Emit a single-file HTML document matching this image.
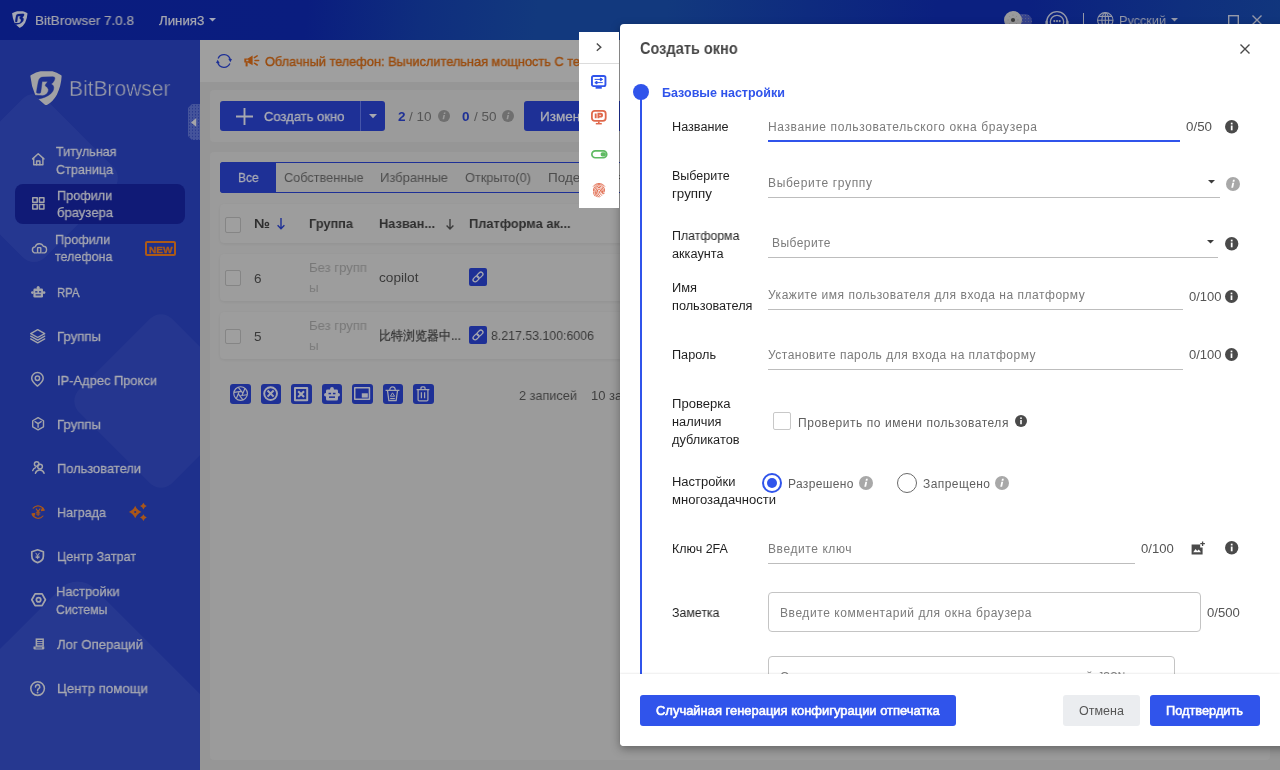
<!DOCTYPE html>
<html lang="ru"><head><meta charset="utf-8"><title>BitBrowser</title>
<style>
*{box-sizing:border-box;margin:0;padding:0}
html,body{width:1280px;height:770px;overflow:hidden;background:#949494;font-family:"Liberation Sans",sans-serif}
.a{position:absolute}
.t{position:absolute;white-space:nowrap;line-height:normal;transform-origin:0 50%;will-change:transform;font-family:"Liberation Sans",sans-serif}
svg{position:absolute;overflow:visible}
</style></head><body>

<div class="a" style="left:0;top:0;width:1280px;height:770px;background:#969696"></div>
<!-- header -->
<div class="a" style="left:0;top:0;width:1280px;height:40px;background:linear-gradient(97deg,#0a1c7f 0%,#0a1d7f 24%,#0f2e7e 33%,#12397e 42%,#12397e 52%,#0e2b7f 63%,#0b2080 73%,#0b2080 80%,#0f2f7e 92%,#11367d 100%)"></div>
<!-- sidebar -->
<div class="a" style="left:0;top:40px;width:200px;height:730px;background:#1e308c;overflow:hidden">
  <div class="a" style="left:-30px;top:74px;width:128px;height:128px;border-radius:16px;background:rgba(255,255,255,0.035);transform:rotate(45deg)"></div>
  <div class="a" style="left:95px;top:295px;width:132px;height:132px;border-radius:16px;background:rgba(255,255,255,0.03);transform:rotate(45deg)"></div>
  <div class="a" style="left:-78.5px;top:595.5px;width:311px;height:311px;border-radius:24px;background:rgba(255,255,255,0.04);transform:rotate(45deg)"></div>
</div>
<div class="a" style="left:15px;top:184px;width:170px;height:40px;border-radius:8px;background:#101a76"></div>
<!-- notice bar -->
<div class="a" style="left:200px;top:40px;width:1080px;height:42px;background:#9f9f9f"></div>
<!-- card 1 -->
<div class="a" style="left:210px;top:90px;width:1060px;height:52px;border-radius:4px;background:#9b9b9b"></div>
<!-- card 2 -->
<div class="a" style="left:210px;top:152px;width:1060px;height:608px;border-radius:4px;background:#9b9b9b"></div>
<!-- create button -->
<div class="a" style="left:220px;top:101px;width:165px;height:30px;border-radius:3px;background:#1e3096"></div>
<div class="a" style="left:360px;top:101px;width:1px;height:30px;background:rgba(255,255,255,0.18)"></div>
<div class="a" style="left:524px;top:101px;width:120px;height:30px;border-radius:3px;background:#1e3096"></div>
<!-- tabs -->
<div class="a" style="left:220px;top:162px;width:1040px;height:31px;border:1px solid #1e3096;border-radius:3px;"></div>
<div class="a" style="left:220px;top:162px;width:56px;height:31px;border-radius:3px 0 0 3px;background:#1e3096"></div>
<!-- table rows -->
<div class="a" style="left:220px;top:204px;width:1040px;height:39px;border-radius:4px;background:#9d9d9d;box-shadow:0 1px 3px rgba(0,0,0,0.06)"></div>
<div class="a" style="left:220px;top:254px;width:1040px;height:47px;border-radius:4px;background:#9d9d9d;box-shadow:0 1px 3px rgba(0,0,0,0.06)"></div>
<div class="a" style="left:220px;top:312px;width:1040px;height:47px;border-radius:4px;background:#9d9d9d;box-shadow:0 1px 3px rgba(0,0,0,0.06)"></div>
<div class="a" style="left:225.3px;top:217.3px;width:15.4px;height:15.4px;border:1px solid #858585;border-radius:2px;background:#9f9f9f"></div>
<div class="a" style="left:225.3px;top:270.2px;width:15.4px;height:15.4px;border:1px solid #858585;border-radius:2px;background:#9f9f9f"></div>
<div class="a" style="left:225.3px;top:328.6px;width:15.4px;height:15.4px;border:1px solid #858585;border-radius:2px;background:#9f9f9f"></div>
<div class="a" style="left:469px;top:268px;width:18px;height:18px;border-radius:2px;background:#1e3096"></div>
<div class="a" style="left:469px;top:326px;width:18px;height:18px;border-radius:2px;background:#1e3096"></div>
<div class="a" style="left:229.7px;top:383.9px;width:21.1px;height:19.8px;border-radius:3px;background:#1e3096"></div>
<div class="a" style="left:261px;top:383.9px;width:20px;height:19.8px;border-radius:3px;background:#1e3096"></div>
<div class="a" style="left:291.1px;top:383.9px;width:20.6px;height:19.8px;border-radius:3px;background:#1e3096"></div>
<div class="a" style="left:322px;top:383.9px;width:19.8px;height:19.8px;border-radius:3px;background:#1e3096"></div>
<div class="a" style="left:352.1px;top:383.9px;width:20.8px;height:19.8px;border-radius:3px;background:#1e3096"></div>
<div class="a" style="left:383px;top:383.9px;width:19.8px;height:19.8px;border-radius:3px;background:#1e3096"></div>
<div class="a" style="left:413.1px;top:383.9px;width:20.6px;height:19.8px;border-radius:3px;background:#1e3096"></div>
<svg style="left:11.6px;top:11.4px;" width="15.6" height="17" viewBox="0 0 32 35"><path d="M0.2,5.4 Q0,4.5 1,4.1 Q6,1 10.5,0.3 L22.5,0.3 Q27,1.2 31,4.1 Q32,4.6 31.8,5.6 Q31.3,15 27,24 Q23,31 17.3,34.2 Q16,34.9 14.6,34 L8.2,28.3 L5.2,24.6 Q1,15 0.2,5.4 Z" fill="#a5a8b4"/><path d="M6.3,21.8 L7.1,16.4 L8.2,10.7 Q8.8,8 9.8,7.3 Q11,6.2 12.9,6.1 L22.9,5.7 Q25.3,5.8 25,7.4 Q24.8,9 24.1,10.2 Q23,12.2 21.4,13.2 Q24.2,14.6 23.9,17 Q23.8,19.5 22.6,21 Q21,23.4 18,25 Q15,26.6 12,27.5 Q10,28 8.2,28.4 L4.6,24.5 L11.4,24.9 Q13,25 14.2,24.6 Q16,24 17.2,22.4 Q18.8,20.2 18.4,18.6 Q18,17.2 16.6,16.2 Q15.6,15.4 15.1,14.3 Q15.6,13.4 16.4,12.4 Q17.4,11.4 17.5,10.7 L12.1,10.7 L11.4,16.4 L10.7,21.4 Q10.4,22.6 9,22.6 Q6.4,22.8 6.3,21.8 Z" fill="#0b1e80" stroke="#0b1e80" stroke-width="0.4" stroke-linejoin="round"/></svg>
<svg style="left:30px;top:70.7px;" width="32" height="34.6" viewBox="0 0 32 35"><path d="M0.2,5.4 Q0,4.5 1,4.1 Q6,1 10.5,0.3 L22.5,0.3 Q27,1.2 31,4.1 Q32,4.6 31.8,5.6 Q31.3,15 27,24 Q23,31 17.3,34.2 Q16,34.9 14.6,34 L8.2,28.3 L5.2,24.6 Q1,15 0.2,5.4 Z" fill="#a2a2a4"/><path d="M6.3,21.8 L7.1,16.4 L8.2,10.7 Q8.8,8 9.8,7.3 Q11,6.2 12.9,6.1 L22.9,5.7 Q25.3,5.8 25,7.4 Q24.8,9 24.1,10.2 Q23,12.2 21.4,13.2 Q24.2,14.6 23.9,17 Q23.8,19.5 22.6,21 Q21,23.4 18,25 Q15,26.6 12,27.5 Q10,28 8.2,28.4 L4.6,24.5 L11.4,24.9 Q13,25 14.2,24.6 Q16,24 17.2,22.4 Q18.8,20.2 18.4,18.6 Q18,17.2 16.6,16.2 Q15.6,15.4 15.1,14.3 Q15.6,13.4 16.4,12.4 Q17.4,11.4 17.5,10.7 L12.1,10.7 L11.4,16.4 L10.7,21.4 Q10.4,22.6 9,22.6 Q6.4,22.8 6.3,21.8 Z" fill="#1e308c" stroke="#1e308c" stroke-width="0.4" stroke-linejoin="round"/></svg>
<svg style="left:208.8px;top:18.2px;" width="7" height="3.6" viewBox="0 0 7 3.6"><path d="M0,0 H7 L3.5,3.6 Z" fill="#a3a7ba"/></svg>
<div class="a" style="left:188px;top:104px;width:12px;height:36px;background-color:#45549b;background-image:radial-gradient(circle,#2a3a8e 0.7px,transparent 1px);background-size:3px 3.1px;clip-path:polygon(4px 0,100% 0,100% 100%,4px 100%,0 32px,0 4px)"></div><svg style="left:191px;top:117.6px;" width="5.2" height="8.8" viewBox="0 0 5.2 8.8"><path d="M5.2,0 V8.8 L0,4.4 Z" fill="#a5a5a8"/></svg>
<svg style="left:31.8px;top:153.4px;" width="12.5" height="12.5" viewBox="0 0 12.5 12.5"><g fill="none" stroke="#a3a4aa" stroke-width="1.45" stroke-linejoin="round" stroke-linecap="round"><path d="M0.6,5.9 L6.2,0.7 L11.9,5.9"/><path d="M1.7,5.2 V11.8 H10.9 V5.2"/><path d="M4.6,11.8 V7.9 H7.9 V11.8"/></g></svg>
<svg style="left:31.8px;top:197.3px;" width="12.7" height="12.7" viewBox="0 0 12.7 12.7"><g fill="none" stroke="#a3a4aa" stroke-width="1.5" stroke-linejoin="round" stroke-linecap="round"><rect x="0.75" y="0.75" width="4.5" height="4.5"/><rect x="7.45" y="0.75" width="4.5" height="4.5"/><rect x="0.75" y="7.45" width="4.5" height="4.5"/><rect x="7.45" y="7.45" width="4.5" height="4.5"/></g></svg>
<svg style="left:31.7px;top:243px;" width="14.7" height="10.6" viewBox="0 0 14.7 10.6"><g fill="none" stroke="#a3a4aa" stroke-width="1.4" stroke-linejoin="round" stroke-linecap="round"><path d="M4.6,9.9 H3.6 A3,3 0 0 1 3.2,3.9 A4.3,4.3 0 0 1 11.3,3.3 A3.3,3.3 0 0 1 11.2,9.9 H9.9"/><rect x="5.6" y="4.6" width="3.2" height="5.3" rx="0.4"/></g></svg>
<svg style="left:31.1px;top:286px;" width="14.4" height="11.6" viewBox="0 0 14.4 11.6"><g fill="#a3a4aa"><rect x="2.4" y="2.6" width="9.6" height="9" rx="1.3"/><circle cx="1.4" cy="6.6" r="1.4"/><circle cx="13" cy="6.6" r="1.4"/><path d="M5.6,2.8 A1.7,1.9 0 0 1 8.8,2.8 Z" /><circle cx="7.2" cy="1.6" r="1.5"/></g><g fill="#1e308c"><rect x="4.2" y="5.2" width="2.2" height="1.3"/><rect x="8" y="5.2" width="2.2" height="1.3"/><rect x="4.6" y="8.3" width="5.2" height="1.2"/></g></svg>
<svg style="left:30.3px;top:328.5px;" width="15.4" height="14.5" viewBox="0 0 15.4 14.5"><g fill="none" stroke="#a3a4aa" stroke-width="1.4" stroke-linejoin="round" stroke-linecap="round"><path d="M7.7,0.7 L14.7,4.6 L7.7,8.5 L0.7,4.6 Z"/><path d="M0.7,7.2 L7.7,11.1 L14.7,7.2"/><path d="M0.7,9.9 L7.7,13.8 L14.7,9.9"/></g></svg>
<svg style="left:31.4px;top:372.3px;" width="12.9" height="14.8" viewBox="0 0 12.9 14.8"><g fill="none" stroke="#a3a4aa" stroke-width="1.5" stroke-linejoin="round" stroke-linecap="round"><path d="M6.45,14.1 C6.45,14.1 0.7,9.6 0.7,6.3 A5.75,5.75 0 0 1 12.2,6.3 C12.2,9.6 6.45,14.1 6.45,14.1 Z"/><circle cx="6.45" cy="6.3" r="2.2"/></g></svg>
<svg style="left:31.9px;top:417px;" width="12.2" height="13.6" viewBox="0 0 12.2 13.6"><g fill="none" stroke="#a3a4aa" stroke-width="1.4" stroke-linejoin="round" stroke-linecap="round"><path d="M6.1,0.7 L11.5,3.75 V9.85 L6.1,12.9 L0.7,9.85 V3.75 Z"/><path d="M3,4.7 L6.1,6.6 L9.2,4.7 M6.1,6.6 V10.2"/></g></svg>
<svg style="left:31.7px;top:461.3px;" width="12.8" height="12.8" viewBox="0 0 12.8 12.8"><g fill="none" stroke="#a3a4aa" stroke-width="1.45" stroke-linejoin="round" stroke-linecap="round"><circle cx="4.7" cy="3" r="2.3"/><path d="M0.7,9.6 A4.4,4.4 0 0 1 3.6,6.6"/><circle cx="8" cy="5.6" r="2.4"/><path d="M3.4,12.2 A4.6,4.6 0 0 1 12.1,12.2"/></g></svg>
<svg style="left:31px;top:504.8px;" width="14.2" height="14.2" viewBox="0 0 14.2 14.2"><g fill="none" stroke="#a8561a" stroke-width="1.1" stroke-linejoin="round" stroke-linecap="round"><path d="M2.2,3.2 A6.2,6.2 0 0 1 12.9,5"/><path d="M12,11 A6.2,6.2 0 0 1 1.3,9.2"/><path d="M11.6,2.6 L13.2,5.3 L10.4,5.6 Z" fill="#a8561a"/><path d="M2.6,11.6 L1,8.9 L3.8,8.6 Z" fill="#a8561a"/><path d="M5.2,3.9 L7.1,6.6 L9,3.9 M7.1,6.6 V10.4 M5.3,7.3 H8.9 M5.3,9 H8.9"/></g></svg>
<svg style="left:31.3px;top:548.6px;" width="13.2" height="14.3" viewBox="0 0 13.2 14.3"><g fill="none" stroke="#a3a4aa" stroke-width="1.7" stroke-linejoin="round" stroke-linecap="round"><path d="M6.6,0.8 L12.4,2.7 V7 C12.4,10.4 9.6,12.7 6.6,13.6 C3.6,12.7 0.8,10.4 0.8,7 V2.7 Z"/></g><g fill="none" stroke="#a3a4aa" stroke-width="1.0" stroke-linejoin="round" stroke-linecap="round"><path d="M4.9,4.2 L6.6,6.5 L8.3,4.2 M6.6,6.5 V9.7 M5,7.2 H8.2 M5,8.6 H8.2"/></g></svg>
<svg style="left:30.8px;top:592.7px;" width="15.2" height="13.5" viewBox="0 0 15.2 13.5"><g fill="none" stroke="#a3a4aa" stroke-width="1.75" stroke-linejoin="round" stroke-linecap="round"><path d="M4.1,0.8 H11.1 L14.4,6.75 L11.1,12.7 H4.1 L0.8,6.75 Z"/><circle cx="7.6" cy="6.75" r="2.2"/></g></svg>
<svg style="left:32.5px;top:638.3px;" width="11.9" height="11.8" viewBox="0 0 11.9 11.8"><g fill="#a3a4aa"><path d="M2.6,0.4 H10.9 V8.6 H2.6 Z"/><path d="M0.5,8.6 H11.3 V10.2 Q11.3,11.5 10,11.5 H1.8 Q0.5,11.5 0.5,10.2 Z"/></g><g fill="#1e308c"><rect x="4.2" y="2" width="5.2" height="1.1"/><rect x="4.2" y="4.1" width="5.2" height="1.1"/><rect x="4.2" y="6.2" width="5.2" height="1.1"/><rect x="2.6" y="9.5" width="6.4" height="0.9"/></g></svg>
<svg style="left:30.4px;top:680.6px;" width="15.2" height="15.2" viewBox="0 0 15.2 15.2"><g fill="none" stroke="#a3a4aa" stroke-width="1.55" stroke-linejoin="round" stroke-linecap="round"><circle cx="7.6" cy="7.6" r="6.8"/><path d="M5.5,6 A2.15,2.15 0 1 1 8.7,7.7 C7.8,8.3 7.6,8.7 7.6,9.5"/></g><circle cx="7.6" cy="11.5" r="0.9" fill="#a3a4aa"/></svg>
<div class="a" style="left:145px;top:240.5px;width:31px;height:15.5px;border:2px solid #ad5a17;border-radius:2px;"></div><svg style="left:128px;top:501px;" width="21" height="22" viewBox="0 0 21 22"><path d="M7.2,4.7 Q8.964,9.236 13.5,11 Q8.964,12.764 7.2,17.3 Q5.436,12.764 0.9000000000000004,11 Q5.436,9.236 7.2,4.7 Z" fill="#a8561a"/><circle cx="7.2" cy="11" r="1.1" fill="#1e308c"/><path d="M15.4,1.6999999999999997 Q16.352,4.148 18.8,5.1 Q16.352,6.052 15.4,8.5 Q14.448,6.052 12.0,5.1 Q14.448,4.148 15.4,1.6999999999999997 Z" fill="#a8561a"/><path d="M15.4,13.200000000000001 Q16.352,15.648000000000001 18.8,16.6 Q16.352,17.552000000000003 15.4,20.0 Q14.448,17.552000000000003 12.0,16.6 Q14.448,15.648000000000001 15.4,13.200000000000001 Z" fill="#a8561a"/></svg>
<svg style="left:216px;top:52.5px;" width="16" height="16" viewBox="0 0 16 16"><g fill="none" stroke="#1e3096" stroke-width="1.3"><path d="M2.1,5.4 A6.5,6.5 0 0 1 14.2,6.2"/><path d="M13.9,10.6 A6.5,6.5 0 0 1 1.8,9.8"/></g><path d="M12.2,5.8 L16,6 L14.4,9.2 Z" fill="#1e3096"/><path d="M3.8,10.2 L0,10 L1.6,6.8 Z" fill="#1e3096"/></svg>
<svg style="left:244px;top:55px;" width="16" height="12" viewBox="0 0 16 12"><g fill="#9f4e10"><path d="M0.3,3.6 H3.8 L8.6,0.6 V10.2 L3.8,7.4 H0.3 Z"/><rect x="1.6" y="7.2" width="2" height="4.2"/></g><g stroke="#9f4e10" stroke-width="1.5" stroke-linecap="round"><path d="M11,5.4 H14.6"/><path d="M10.4,2.6 L13.2,0.8"/><path d="M10.4,8.2 L13.2,10"/></g><rect x="2.2" y="4.7" width="2.2" height="1.5" fill="#9f9f9f"/></svg>
<svg style="left:235.5px;top:107.5px;" width="17" height="17" viewBox="0 0 17 17"><path d="M8.5,0 V17 M0,8.5 H17" stroke="#a7a8b0" stroke-width="1.9" fill="none"/></svg>
<svg style="left:368.6px;top:114px;" width="8" height="4.2" viewBox="0 0 8 4.2"><path d="M0,0 H8 L4,4.2 Z" fill="#a7a8b0"/></svg>
<svg style="left:437.6px;top:109.8px" width="12" height="12" viewBox="-6.5 -6.5 13 13"><circle cx="0" cy="0" r="6.5" fill="#6f6f6f"/><g fill="#9b9b9b" transform="skewX(-12)"><rect x="-0.85" y="-1.1" width="1.7" height="4.6"/><rect x="-0.85" y="-3.9" width="1.7" height="1.7"/></g></svg>
<svg style="left:502.3px;top:109.8px" width="12" height="12" viewBox="-6.5 -6.5 13 13"><circle cx="0" cy="0" r="6.5" fill="#6f6f6f"/><g fill="#9b9b9b" transform="skewX(-12)"><rect x="-0.85" y="-1.1" width="1.7" height="4.6"/><rect x="-0.85" y="-3.9" width="1.7" height="1.7"/></g></svg>
<svg style="left:276.6px;top:217.6px;" width="8" height="11.400000000000006" viewBox="0 0 8 11.400000000000006"><path d="M4,0 V10.800000000000006 M0.6,7.2000000000000055 L4,10.700000000000006 L7.4,7.2000000000000055" fill="none" stroke="#1e3096" stroke-width="1.4" stroke-linejoin="miter"/></svg>
<svg style="left:446.1px;top:218.6px;" width="8" height="10.800000000000011" viewBox="0 0 8 10.800000000000011"><path d="M4,0 V10.200000000000012 M0.6,6.600000000000011 L4,10.100000000000012 L7.4,6.600000000000011" fill="none" stroke="#3c3c3c" stroke-width="1.4" stroke-linejoin="miter"/></svg>
<svg style="left:471px;top:270px;" width="14" height="14" viewBox="0 0 14 14"><g transform="rotate(-45 7 7)" fill="none" stroke="#a5a6af" stroke-width="1.3"><rect x="0.9" y="4.9" width="6.6" height="4.2" rx="2.1"/><rect x="6.5" y="4.9" width="6.6" height="4.2" rx="2.1"/></g></svg>
<svg style="left:471px;top:328px;" width="14" height="14" viewBox="0 0 14 14"><g transform="rotate(-45 7 7)" fill="none" stroke="#a5a6af" stroke-width="1.3"><rect x="0.9" y="4.9" width="6.6" height="4.2" rx="2.1"/><rect x="6.5" y="4.9" width="6.6" height="4.2" rx="2.1"/></g></svg>
<svg style="left:232.70000000000002px;top:386.2px;" width="15.2" height="15.2" viewBox="0 0 14 14"><g fill="none" stroke="#a5a6af" stroke-width="1.1" stroke-linejoin="round"><circle cx="7" cy="7" r="6.3"/><path d="M13.11,8.08 L6.28,8.97 M9.12,12.83 L4.93,7.36 M3.01,11.75 L5.65,5.39 M0.89,5.92 L7.72,5.03 M4.88,1.17 L9.07,6.64 M10.99,2.25 L8.35,8.61 "/></g></svg>
<svg style="left:263.4px;top:386.2px;" width="15.2" height="15.2" viewBox="0 0 14 14"><g fill="none" stroke="#a5a6af" stroke-width="1.8" stroke-linejoin="round"><circle cx="7" cy="7" r="5.9"/></g><g fill="none" stroke="#a5a6af" stroke-width="1.9" stroke-linejoin="round"><path d="M4.2,4.2 L9.8,9.8 M9.8,4.2 L4.2,9.8"/></g></svg>
<svg style="left:294.29999999999995px;top:386.7px;" width="14.2" height="14.2" viewBox="0 0 13 13"><g fill="none" stroke="#a5a6af" stroke-width="1.8" stroke-linejoin="round"><rect x="0.9" y="0.9" width="11.2" height="11.2"/></g><g fill="none" stroke="#a5a6af" stroke-width="1.9" stroke-linejoin="round"><path d="M3.8,3.8 L9.2,9.2 M9.2,3.8 L3.8,9.2"/></g></svg>
<svg style="left:323.9px;top:386.6px;" width="16" height="13.4" viewBox="0 0 16 13.4"><g fill="#a5a6af"><rect x="2" y="2.6" width="12" height="10.8" rx="1.5"/><circle cx="1.7" cy="7.8" r="1.7"/><circle cx="14.3" cy="7.8" r="1.7"/><circle cx="8" cy="1.9" r="1.9"/><rect x="6.2" y="1.9" width="3.6" height="1.4"/></g><g fill="#1e3096"><rect x="4.5" y="5.8" width="2.6" height="1.5"/><rect x="8.9" y="5.8" width="2.6" height="1.5"/><rect x="5" y="9.4" width="6" height="1.5"/></g></svg>
<svg style="left:354.4px;top:387.3px;" width="16.2" height="13" viewBox="0 0 15 12"><g fill="none" stroke="#a5a6af" stroke-width="1.4" stroke-linejoin="round"><rect x="0.7" y="0.7" width="13.6" height="10.6"/></g><rect x="7.2" y="5.8" width="5.6" height="4" fill="#a5a6af"/></svg>
<svg style="left:385.4px;top:385.8px;" width="15" height="16" viewBox="0 0 14 15"><g fill="none" stroke="#a5a6af" stroke-width="1.2" stroke-linejoin="round"><path d="M0.5,4.2 H13.5 M2.3,4.2 L3.6,13.7 H10.4 L11.7,4.2 M4.4,4 A2.6,3.2 0 0 1 9.6,4"/></g><g fill="none" stroke="#a5a6af" stroke-width="0.9" stroke-linejoin="round"><path d="M7,6.4 L9,9.6 H5 Z"/></g><rect x="4.8" y="11.2" width="4.4" height="1.2" fill="#a5a6af"/></svg>
<svg style="left:416.4px;top:385.8px;" width="14" height="16" viewBox="0 0 13 15"><g fill="none" stroke="#a5a6af" stroke-width="1.2" stroke-linejoin="round"><path d="M0.5,3.4 H12.5 M4.6,3.2 V1.8 Q4.6,0.8 5.6,0.8 H7.4 Q8.4,0.8 8.4,1.8 V3.2 M1.9,3.6 V12.8 Q1.9,13.9 3,13.9 H10 Q11.1,13.9 11.1,12.8 V3.6 M5,5.8 V11.6 M8,5.8 V11.6"/></g></svg>
<div class="a" style="left:1012px;top:14px;width:20px;height:14px;border-radius:7px;background-color:#37448f;background-image:radial-gradient(circle,#5a5f8a 0.6px,transparent 0.9px);background-size:3px 3px"></div><div class="a" style="left:1004px;top:10.8px;width:18px;height:18px;border-radius:9px;background:#9a9a9c"></div><svg style="left:1004px;top:10.8px;" width="18" height="18" viewBox="0 0 18 18"><circle cx="9" cy="9" r="2.1" fill="#3c3c3c"/><g stroke="#8a8a8c" stroke-width="1"><path d="M9,3.4 V5 M9,13 V14.6 M3.4,9 H5 M13,9 H14.6 M5,5 L6.2,6.2 M11.8,11.8 L13,13 M13,5 L11.8,6.2 M5,13 L6.2,11.8"/></g></svg>
<svg style="left:1046px;top:11.2px;" width="22" height="22" viewBox="0 0 22 22"><g fill="none" stroke="#9599a9" stroke-width="1.3"><circle cx="11" cy="11" r="10.3"/><circle cx="11" cy="11" r="6.7"/></g><g fill="#9599a9"><circle cx="8.3" cy="10.1" r="1.05"/><circle cx="11" cy="10.1" r="1.05"/><circle cx="13.7" cy="10.1" r="1.05"/><rect x="-0.6" y="9.6" width="2.4" height="5" rx="1.2"/><rect x="20.2" y="9.6" width="2.4" height="5" rx="1.2"/></g></svg>
<div class="a" style="left:1083px;top:13px;width:1px;height:15px;background:#9599a9"></div><svg style="left:1096.5px;top:12px;" width="16.6" height="16.6" viewBox="0 0 16.6 16.6"><g fill="none" stroke="#9599a9" stroke-width="1.1"><circle cx="8.3" cy="8.3" r="7.7"/><ellipse cx="8.3" cy="8.3" rx="3.4" ry="7.7"/><path d="M0.6,8.3 H16 M1.6,4.4 H15 M1.6,12.2 H15 M8.3,0.6 V16"/></g></svg>
<svg style="left:1171px;top:18.4px;" width="7" height="3.6" viewBox="0 0 7 3.6"><path d="M0,0 H7 L3.5,3.6 Z" fill="#9599a9"/></svg>
<svg style="left:1227.6px;top:14.6px;" width="11" height="12" viewBox="0 0 11 12"><rect x="0.7" y="0.7" width="9.6" height="10.6" fill="none" stroke="#9599a9" stroke-width="1.4"/></svg>
<svg style="left:1252px;top:15px;" width="10" height="10" viewBox="0 0 10 10"><path d="M0.5,0.5 L9.5,9.5 M9.5,0.5 L0.5,9.5" stroke="#9599a9" stroke-width="1.4" fill="none"/></svg>

<span class="t" id="t0" style="left:35.00px;top:12.69px;font-size:13.6px;color:#a1a2ab;-webkit-text-stroke:0.2px #a1a2ab;transform:scaleX(0.9926);">BitBrowser 7.0.8</span>
<span class="t" id="t1" style="left:158.60px;top:13.23px;font-size:13px;color:#a6a7b0;-webkit-text-stroke:0.25px #a6a7b0;transform:scaleX(1.0199);">Линия3</span>
<span class="t" id="t2" style="left:1119.20px;top:13.23px;font-size:13px;color:#9599a9;transform:scaleX(0.9741);">Русский</span>
<span class="t" id="t3" style="left:68.60px;top:75.89px;font-size:22px;color:#a3a4ab;transform:scaleX(0.9543);-webkit-text-stroke:0.45px #1e308c;">BitBrowser</span>
<span class="t" id="t4" style="left:55.50px;top:144.28px;font-size:13.5px;color:#a8a9b1;-webkit-text-stroke:0.3px #a8a9b1;transform:scaleX(0.9283);">Титульная</span>
<span class="t" id="t5" style="left:55.50px;top:161.78px;font-size:13.5px;color:#a8a9b1;-webkit-text-stroke:0.3px #a8a9b1;transform:scaleX(0.9316);">Страница</span>
<span class="t" id="t6" style="left:57.20px;top:187.78px;font-size:13.5px;color:#a8a9b1;-webkit-text-stroke:0.3px #a8a9b1;transform:scaleX(0.9405);">Профили</span>
<span class="t" id="t7" style="left:57.20px;top:205.48px;font-size:13.5px;color:#a8a9b1;-webkit-text-stroke:0.3px #a8a9b1;transform:scaleX(0.9668);">браузера</span>
<span class="t" id="t8" style="left:54.80px;top:231.78px;font-size:13.5px;color:#a8a9b1;-webkit-text-stroke:0.3px #a8a9b1;transform:scaleX(0.9405);">Профили</span>
<span class="t" id="t9" style="left:54.80px;top:249.38px;font-size:13.5px;color:#a8a9b1;-webkit-text-stroke:0.3px #a8a9b1;transform:scaleX(0.9265);">телефона</span>
<span class="t" id="t10" style="left:56.50px;top:285.28px;font-size:13.5px;color:#a8a9b1;-webkit-text-stroke:0.3px #a8a9b1;transform:scaleX(0.8406);">RPA</span>
<span class="t" id="t11" style="left:56.50px;top:329.28px;font-size:13.5px;color:#a8a9b1;-webkit-text-stroke:0.3px #a8a9b1;transform:scaleX(0.9781);">Группы</span>
<span class="t" id="t12" style="left:56.50px;top:373.28px;font-size:13.5px;color:#a8a9b1;-webkit-text-stroke:0.3px #a8a9b1;transform:scaleX(0.9549);">IP-Адрес Прокси</span>
<span class="t" id="t13" style="left:56.50px;top:417.28px;font-size:13.5px;color:#a8a9b1;-webkit-text-stroke:0.3px #a8a9b1;transform:scaleX(0.9781);">Группы</span>
<span class="t" id="t14" style="left:56.50px;top:461.28px;font-size:13.5px;color:#a8a9b1;-webkit-text-stroke:0.3px #a8a9b1;transform:scaleX(0.9532);">Пользователи</span>
<span class="t" id="t15" style="left:56.50px;top:505.28px;font-size:13.5px;color:#a8a9b1;-webkit-text-stroke:0.3px #a8a9b1;transform:scaleX(0.9317);">Награда</span>
<span class="t" id="t16" style="left:56.50px;top:549.28px;font-size:13.5px;color:#a8a9b1;-webkit-text-stroke:0.3px #a8a9b1;transform:scaleX(0.9311);">Центр Затрат</span>
<span class="t" id="t17" style="left:56.00px;top:584.28px;font-size:13.5px;color:#a8a9b1;-webkit-text-stroke:0.3px #a8a9b1;transform:scaleX(0.9592);">Настройки</span>
<span class="t" id="t18" style="left:56.00px;top:602.28px;font-size:13.5px;color:#a8a9b1;-webkit-text-stroke:0.3px #a8a9b1;transform:scaleX(0.9102);">Системы</span>
<span class="t" id="t19" style="left:56.50px;top:637.28px;font-size:13.5px;color:#a8a9b1;-webkit-text-stroke:0.3px #a8a9b1;transform:scaleX(0.9750);">Лог Операций</span>
<span class="t" id="t20" style="left:56.50px;top:681.28px;font-size:13.5px;color:#a8a9b1;-webkit-text-stroke:0.3px #a8a9b1;transform:scaleX(0.9821);">Центр помощи</span>
<span class="t" id="t21" style="left:148.80px;top:243.60px;font-size:9.5px;color:#ad5a17;font-weight:700;-webkit-text-stroke:0.3px #ad5a17;transform:scaleX(1.0644);">NEW</span>
<span class="t" id="t22" style="left:264.60px;top:54.03px;font-size:13px;color:#9a4c0e;-webkit-text-stroke:0.4px #9a4c0e;transform:scaleX(0.9813);">Облачный телефон: Вычислительная мощность С те</span>
<span class="t" id="t23" style="left:263.60px;top:108.78px;font-size:13.5px;color:#abacb5;-webkit-text-stroke:0.35px #abacb5;transform:scaleX(0.9636);">Создать окно</span>
<span class="t" id="t24" style="left:397.70px;top:108.78px;font-size:13.5px;color:#1e3096;font-weight:700;">2</span>
<span class="t" id="t25" style="left:409.00px;top:108.78px;font-size:13.5px;color:#555;">/ 10</span>
<span class="t" id="t26" style="left:462.00px;top:108.78px;font-size:13.5px;color:#1e3096;font-weight:700;">0</span>
<span class="t" id="t27" style="left:473.50px;top:108.78px;font-size:13.5px;color:#555;">/ 50</span>
<span class="t" id="t28" style="left:540.20px;top:108.78px;font-size:13.5px;color:#abacb5;-webkit-text-stroke:0.3px #abacb5;">Изменить</span>
<span class="t" id="t29" style="left:237.80px;top:169.78px;font-size:13.5px;color:#abacb5;-webkit-text-stroke:0.3px #abacb5;transform:scaleX(0.8897);">Все</span>
<span class="t" id="t30" style="left:284.00px;top:169.78px;font-size:13.5px;color:#4d4d4d;transform:scaleX(0.9417);">Собственные</span>
<span class="t" id="t31" style="left:380.00px;top:169.78px;font-size:13.5px;color:#4d4d4d;transform:scaleX(0.9628);">Избранные</span>
<span class="t" id="t32" style="left:464.70px;top:169.78px;font-size:13.5px;color:#4d4d4d;transform:scaleX(0.9450);">Открыто(0)</span>
<span class="t" id="t33" style="left:547.50px;top:169.78px;font-size:13.5px;color:#4d4d4d;">Поделиться</span>
<span class="t" id="t34" style="left:254.00px;top:216.28px;font-size:13.5px;color:#2f2f2f;font-weight:700;transform:scaleX(1.0622);">№</span>
<span class="t" id="t35" style="left:309.00px;top:216.28px;font-size:13.5px;color:#2f2f2f;font-weight:700;transform:scaleX(0.9453);">Группа</span>
<span class="t" id="t36" style="left:378.80px;top:216.28px;font-size:13.5px;color:#2f2f2f;font-weight:700;transform:scaleX(0.9464);">Назван...</span>
<span class="t" id="t37" style="left:469.00px;top:216.28px;font-size:13.5px;color:#2f2f2f;font-weight:700;transform:scaleX(0.9492);">Платформа ак...</span>
<span class="t" id="t38" style="left:253.60px;top:271.28px;font-size:13.5px;color:#3a3a3a;">6</span>
<span class="t" id="t39" style="left:253.60px;top:329.28px;font-size:13.5px;color:#3a3a3a;">5</span>
<span class="t" id="t40" style="left:308.60px;top:259.98px;font-size:13.5px;color:#787878;transform:scaleX(0.9720);">Без групп</span>
<span class="t" id="t41" style="left:308.60px;top:279.78px;font-size:13.5px;color:#7d7d7d;">ы</span>
<span class="t" id="t42" style="left:308.60px;top:317.98px;font-size:13.5px;color:#787878;transform:scaleX(0.9720);">Без групп</span>
<span class="t" id="t43" style="left:308.60px;top:337.78px;font-size:13.5px;color:#7d7d7d;">ы</span>
<span class="t" id="t44" style="left:379.00px;top:270.48px;font-size:13.5px;color:#3a3a3a;transform:scaleX(1.0120);">copilot</span>
<span class="t" id="t45" style="left:379.00px;top:327.04px;font-size:13px;color:#303030;-webkit-text-stroke:0.2px #303030;transform:scaleX(0.9230);">比特浏览器中...</span>
<span class="t" id="t46" style="left:491.00px;top:328.28px;font-size:13.5px;color:#3a3a3a;transform:scaleX(0.9147);">8.217.53.100:6006</span>
<span class="t" id="t47" style="left:519.00px;top:388.24px;font-size:13px;color:#3f3f3f;transform:scaleX(0.9776);">2 записей</span>
<span class="t" id="t48" style="left:591.00px;top:388.24px;font-size:13px;color:#3f3f3f;">10 записей</span>

<!-- dialog -->
<div class="a" style="left:620px;top:24px;width:680px;height:722px;border-radius:4px;background:#fff;box-shadow:0 3px 10px rgba(0,0,0,0.35)"></div>
<!-- tool panel -->
<div class="a" style="left:579px;top:32px;width:40px;height:176px;background:#fff;"></div>
<div class="a" style="left:579px;top:63px;width:40px;height:1px;background:#dcdcdc"></div>
<svg style="left:596.4px;top:43px;" width="6" height="8.4" viewBox="0 0 6 8.4"><path d="M0.8,0.6 L4.8,4.2 L0.8,7.8" fill="none" stroke="#4a4a4a" stroke-width="1.4"/></svg>
<svg style="left:591.4px;top:75px;" width="15.4" height="14" viewBox="0 0 15.4 14"><rect x="0.95" y="0.95" width="13.5" height="10.2" rx="1.6" fill="none" stroke="#3054eb" stroke-width="1.9"/><path d="M3.6,4.4 H11.2 M9.4,3 L11.6,4.4 L9.4,5.8 Z" stroke="#3054eb" stroke-width="1" fill="#3054eb"/><path d="M4.2,7.6 H11.8 M6,6.2 L3.8,7.6 L6,9 Z" stroke="#3054eb" stroke-width="1" fill="#3054eb"/><rect x="4.6" y="11.8" width="6.2" height="1.9" fill="#3054eb"/></svg>
<svg style="left:591.2px;top:110px;" width="15.6" height="15" viewBox="0 0 15.6 15"><rect x="0.9" y="0.9" width="13.8" height="10" rx="2.8" fill="none" stroke="#e0694c" stroke-width="1.8"/><path d="M4.7,3.6 V8.3 M7.4,8.3 V3.7 H9.4 Q11.1,3.7 11.1,5.2 Q11.1,6.6 9.4,6.6 H7.4" fill="none" stroke="#e0694c" stroke-width="1.9"/><path d="M7.8,11.4 V13.2" stroke="#e0694c" stroke-width="1.6"/><path d="M4.8,13.7 H10.8" stroke="#e0694c" stroke-width="1.5"/></svg>
<svg style="left:590.8px;top:149.6px;" width="16.6" height="8.6" viewBox="0 0 16.6 8.6"><rect x="0.85" y="0.85" width="14.9" height="6.9" rx="3.45" fill="none" stroke="#5fba62" stroke-width="1.7"/><rect x="9.7" y="2.2" width="5.2" height="4.2" rx="1.6" fill="#5fba62"/></svg>
<svg style="left:592.1px;top:181.6px;" width="14" height="16" viewBox="0 0 14 16"><g fill="none" stroke="#e0694c" stroke-width="0.95" stroke-linecap="round"><path d="M1.35,4.24 A6.9,6.9 0 0 1 12.65,4.24"/><path d="M1.49,9.17 A5.6,5.6 0 1 1 12.51,9.17"/><path d="M3.28,10.35 A4.3,4.3 0 0 1 9.15,4.48 M10.29,5.44 A4.3,4.3 0 0 1 10.52,10.67"/><path d="M4.18,9.43 A3.0,3.0 0 1 1 9.82,9.43"/><path d="M5.40,8.60 A1.6,1.6 0 0 1 8.60,8.60"/><path d="M1.5,10.6 Q1.8,12.6 3,14 M2.9,10.2 Q3.2,13 5,14.9 M4.2,10.4 Q4.8,13.6 6.8,15.2 M5.4,8.8 Q5.6,12 8,14.6 M7,9 Q7.4,11.6 9.6,13.4 M8.6,8.8 Q8.8,10.6 10.6,11.8 L12,11.6 M10.1,9.6 Q10.8,10.4 12.2,10"/></g></svg>

<div class="a" style="left:620px;top:24px;width:660px;height:650px;overflow:hidden">
<div class="a" style="left:0;top:0;width:660px;height:650px;">
<!-- timeline (coordinates relative to dialog: subtract 620,24) -->
<div class="a" style="left:13px;top:60px;width:16px;height:16px;border-radius:8px;background:#3054eb"></div>
<div class="a" style="left:20px;top:68px;width:2px;height:600px;background:#3054eb"></div>
<!-- underlines -->
<div class="a" style="left:148px;top:116px;width:412px;height:2px;background:#3054eb"></div>
<div class="a" style="left:148px;top:173px;width:452px;height:1px;background:#bdbdbd"></div>
<div class="a" style="left:148px;top:233px;width:450px;height:1px;background:#bdbdbd"></div>
<div class="a" style="left:148px;top:285px;width:415px;height:1px;background:#bdbdbd"></div>
<div class="a" style="left:148px;top:345px;width:415px;height:1px;background:#bdbdbd"></div>
<div class="a" style="left:148px;top:539px;width:367px;height:1px;background:#bdbdbd"></div>
<!-- checkbox -->
<div class="a" style="left:153px;top:388px;width:18px;height:18px;border:1px solid #c8c8c8;border-radius:2px;background:#fff"></div>
<!-- radios -->
<div class="a" style="left:142px;top:449px;width:20px;height:20px;border-radius:10px;border:2px solid #3054eb"></div>
<div class="a" style="left:147px;top:454px;width:10px;height:10px;border-radius:5px;background:#3054eb"></div>
<div class="a" style="left:277px;top:449px;width:20px;height:20px;border-radius:10px;border:1.9px solid #6a6a6a"></div>
<!-- textareas -->
<div class="a" style="left:148px;top:568px;width:433px;height:39.5px;border:1px solid #c4c4c4;border-radius:4px"></div>
<div class="a" style="left:148px;top:632px;width:407px;height:60px;border:1px solid #c4c4c4;border-radius:4px"></div>
<svg style="left:620px;top:20px;" width="10" height="10" viewBox="0 0 10 10"><path d="M0.5,0.5 L9.5,9.5 M9.5,0.5 L0.5,9.5" stroke="#4a4a4a" stroke-width="1.4" fill="none"/></svg>
<svg style="left:605.0px;top:95.5px" width="13.4" height="13.4" viewBox="-6.5 -6.5 13 13"><circle cx="0" cy="0" r="6.5" fill="#4a4a4a"/><g fill="#ffffff"><rect x="-0.85" y="-1.1" width="1.7" height="4.6"/><rect x="-0.85" y="-3.9" width="1.7" height="1.7"/></g></svg>
<svg style="left:605.7px;top:153px" width="14" height="14" viewBox="-6.5 -6.5 13 13"><circle cx="0" cy="0" r="6.5" fill="#a8a8a8"/><g fill="#ffffff" transform="skewX(-12)"><rect x="-0.85" y="-1.1" width="1.7" height="4.6"/><rect x="-0.85" y="-3.9" width="1.7" height="1.7"/></g></svg>
<svg style="left:605.0px;top:213.3px" width="13.4" height="13.4" viewBox="-6.5 -6.5 13 13"><circle cx="0" cy="0" r="6.5" fill="#4a4a4a"/><g fill="#ffffff"><rect x="-0.85" y="-1.1" width="1.7" height="4.6"/><rect x="-0.85" y="-3.9" width="1.7" height="1.7"/></g></svg>
<svg style="left:605.2px;top:265.5px" width="13.0" height="13.0" viewBox="-6.5 -6.5 13 13"><circle cx="0" cy="0" r="6.5" fill="#4a4a4a"/><g fill="#ffffff"><rect x="-0.85" y="-1.1" width="1.7" height="4.6"/><rect x="-0.85" y="-3.9" width="1.7" height="1.7"/></g></svg>
<svg style="left:605.2px;top:323.5px" width="13.0" height="13.0" viewBox="-6.5 -6.5 13 13"><circle cx="0" cy="0" r="6.5" fill="#4a4a4a"/><g fill="#ffffff"><rect x="-0.85" y="-1.1" width="1.7" height="4.6"/><rect x="-0.85" y="-3.9" width="1.7" height="1.7"/></g></svg>
<svg style="left:394.5px;top:391px" width="12" height="12" viewBox="-6.5 -6.5 13 13"><circle cx="0" cy="0" r="6.5" fill="#4a4a4a"/><g fill="#ffffff"><rect x="-0.85" y="-1.1" width="1.7" height="4.6"/><rect x="-0.85" y="-3.9" width="1.7" height="1.7"/></g></svg>
<svg style="left:238.70000000000005px;top:452.2px" width="14" height="14" viewBox="-6.5 -6.5 13 13"><circle cx="0" cy="0" r="6.5" fill="#a8a8a8"/><g fill="#ffffff" transform="skewX(-12)"><rect x="-0.85" y="-1.1" width="1.7" height="4.6"/><rect x="-0.85" y="-3.9" width="1.7" height="1.7"/></g></svg>
<svg style="left:375.20000000000005px;top:451.7px" width="14" height="14" viewBox="-6.5 -6.5 13 13"><circle cx="0" cy="0" r="6.5" fill="#a8a8a8"/><g fill="#ffffff" transform="skewX(-12)"><rect x="-0.85" y="-1.1" width="1.7" height="4.6"/><rect x="-0.85" y="-3.9" width="1.7" height="1.7"/></g></svg>
<svg style="left:605.3px;top:517.1999999999999px" width="13.4" height="13.4" viewBox="-6.5 -6.5 13 13"><circle cx="0" cy="0" r="6.5" fill="#4a4a4a"/><g fill="#ffffff"><rect x="-0.85" y="-1.1" width="1.7" height="4.6"/><rect x="-0.85" y="-3.9" width="1.7" height="1.7"/></g></svg>
<svg style="left:587.9000000000001px;top:156.4px;" width="7" height="3.5" viewBox="0 0 7 3.5"><path d="M0,0 H7 L3.5,3.5 Z" fill="#3c3c3c"/></svg>
<svg style="left:586.5px;top:216.4px;" width="7" height="3.5" viewBox="0 0 7 3.5"><path d="M0,0 H7 L3.5,3.5 Z" fill="#3c3c3c"/></svg>
<svg style="left:570.7px;top:517.0px;" width="14.4" height="14" viewBox="0 0 14.4 14"><path d="M0.6,3.6 H9.2 V6.4 H11.6 V13.4 H0.6 Z" fill="#4a4a4a"/><path d="M2.2,11.2 L4.6,8 L6.2,10 L7.8,8.6 L10,11.2 Z" fill="#fff"/><path d="M11.6,0.4 V5 M9.3,2.7 H13.9" stroke="#4a4a4a" stroke-width="1.3"/></svg>
<span class="t" id="t49" style="left:19.50px;top:16.12px;font-size:16px;color:#464646;font-weight:700;transform:scaleX(0.9091);">Создать окно</span>
<span class="t" id="t50" style="left:41.90px;top:61.69px;font-size:12.5px;color:#3054eb;font-weight:700;transform:scaleX(0.9968);">Базовые настройки</span>
<span class="t" id="t51" style="left:51.70px;top:95.69px;font-size:12.5px;color:#1f1f1f;transform:scaleX(1.0115);">Название</span>
<span class="t" id="t52" style="left:51.70px;top:144.69px;font-size:12.5px;color:#1f1f1f;transform:scaleX(0.9954);">Выберите</span>
<span class="t" id="t53" style="left:51.70px;top:162.69px;font-size:12.5px;color:#1f1f1f;transform:scaleX(1.0689);">группу</span>
<span class="t" id="t54" style="left:51.70px;top:204.69px;font-size:12.5px;color:#1f1f1f;transform:scaleX(0.9865);">Платформа</span>
<span class="t" id="t55" style="left:51.70px;top:222.69px;font-size:12.5px;color:#1f1f1f;transform:scaleX(1.0163);">аккаунта</span>
<span class="t" id="t56" style="left:51.70px;top:256.69px;font-size:12.5px;color:#1f1f1f;transform:scaleX(1.0263);">Имя</span>
<span class="t" id="t57" style="left:51.70px;top:274.69px;font-size:12.5px;color:#1f1f1f;transform:scaleX(1.0168);">пользователя</span>
<span class="t" id="t58" style="left:51.70px;top:323.69px;font-size:12.5px;color:#1f1f1f;transform:scaleX(1.0144);">Пароль</span>
<span class="t" id="t59" style="left:51.70px;top:372.69px;font-size:12.5px;color:#1f1f1f;transform:scaleX(1.0446);">Проверка</span>
<span class="t" id="t60" style="left:51.70px;top:390.69px;font-size:12.5px;color:#1f1f1f;transform:scaleX(1.0226);">наличия</span>
<span class="t" id="t61" style="left:51.70px;top:408.69px;font-size:12.5px;color:#1f1f1f;transform:scaleX(1.0203);">дубликатов</span>
<span class="t" id="t62" style="left:51.70px;top:451.19px;font-size:12.5px;color:#1f1f1f;transform:scaleX(1.0359);">Настройки</span>
<span class="t" id="t63" style="left:51.70px;top:468.69px;font-size:12.5px;color:#1f1f1f;transform:scaleX(1.0449);">многозадачности</span>
<span class="t" id="t64" style="left:51.70px;top:517.69px;font-size:12.5px;color:#1f1f1f;">Ключ 2FA</span>
<span class="t" id="t65" style="left:51.70px;top:581.69px;font-size:12.5px;color:#1f1f1f;transform:scaleX(0.9883);">Заметка</span>
<span class="t" id="t66" style="left:147.70px;top:96.14px;font-size:12px;color:#7b7b7b;letter-spacing:0.617px;">Название пользовательского окна браузера</span>
<span class="t" id="t67" style="left:147.70px;top:152.14px;font-size:12px;color:#7b7b7b;letter-spacing:0.664px;">Выберите группу</span>
<span class="t" id="t68" style="left:151.70px;top:212.14px;font-size:12px;color:#7b7b7b;letter-spacing:0.435px;">Выберите</span>
<span class="t" id="t69" style="left:147.70px;top:264.14px;font-size:12px;color:#7b7b7b;letter-spacing:0.523px;">Укажите имя пользователя для входа на платформу</span>
<span class="t" id="t70" style="left:147.70px;top:324.14px;font-size:12px;color:#7b7b7b;letter-spacing:0.485px;">Установите пароль для входа на платформу</span>
<span class="t" id="t71" style="left:177.80px;top:391.64px;font-size:12px;color:#5f5f5f;letter-spacing:0.542px;">Проверить по имени пользователя</span>
<span class="t" id="t72" style="left:167.70px;top:453.14px;font-size:12px;color:#5f5f5f;letter-spacing:0.361px;">Разрешено</span>
<span class="t" id="t73" style="left:302.80px;top:453.14px;font-size:12px;color:#5f5f5f;letter-spacing:0.439px;">Запрещено</span>
<span class="t" id="t74" style="left:147.70px;top:518.14px;font-size:12px;color:#7b7b7b;letter-spacing:0.581px;">Введите ключ</span>
<span class="t" id="t75" style="left:160.20px;top:582.14px;font-size:12px;color:#7b7b7b;letter-spacing:0.572px;">Введите комментарий для окна браузера</span>
<span class="t" id="t76" style="left:160.20px;top:645.54px;font-size:12px;color:#7b7b7b;">О</span>
<span class="t" id="t77" style="left:466.20px;top:645.54px;font-size:12px;color:#7b7b7b;">й</span>
<span class="t" id="t78" style="left:478.00px;top:645.54px;font-size:12px;color:#7b7b7b;transform:scaleX(0.8496);">JSON</span>
<span class="t" id="t79" style="left:566.20px;top:96.19px;font-size:12.5px;color:#555;transform:scaleX(1.0680);">0/50</span>
<span class="t" id="t80" style="left:569.00px;top:265.69px;font-size:12.5px;color:#555;transform:scaleX(1.0390);">0/100</span>
<span class="t" id="t81" style="left:569.00px;top:323.69px;font-size:12.5px;color:#555;transform:scaleX(1.0390);">0/100</span>
<span class="t" id="t82" style="left:521.20px;top:517.69px;font-size:12.5px;color:#555;transform:scaleX(1.0454);">0/100</span>
<span class="t" id="t83" style="left:587.20px;top:581.69px;font-size:12.5px;color:#555;transform:scaleX(1.0486);">0/500</span>
</div></div>

<div class="a" style="left:620px;top:674px;width:660px;height:72px;background:#fff;border-radius:0 0 0 4px;box-shadow:0 -1px 2px rgba(0,0,0,0.07)"></div>
<div class="a" style="left:640px;top:695px;width:316px;height:31px;border-radius:3px;background:#3054eb"></div>
<div class="a" style="left:1063px;top:695px;width:77px;height:31px;border-radius:3px;background:#ebedf0"></div>
<div class="a" style="left:1150px;top:695px;width:110px;height:31px;border-radius:3px;background:#3054eb"></div>

<span class="t" id="t84" style="left:655.60px;top:704.19px;font-size:12.5px;color:#fff;-webkit-text-stroke:0.55px #fff;transform:scaleX(1.0361);">Случайная генерация конфигурации отпечатка</span>
<span class="t" id="t85" style="left:1079.40px;top:704.19px;font-size:12.5px;color:#555;transform:scaleX(0.9942);">Отмена</span>
<span class="t" id="t86" style="left:1166.30px;top:704.19px;font-size:12.5px;color:#fff;-webkit-text-stroke:0.55px #fff;transform:scaleX(1.0224);">Подтвердить</span>
</body></html>
